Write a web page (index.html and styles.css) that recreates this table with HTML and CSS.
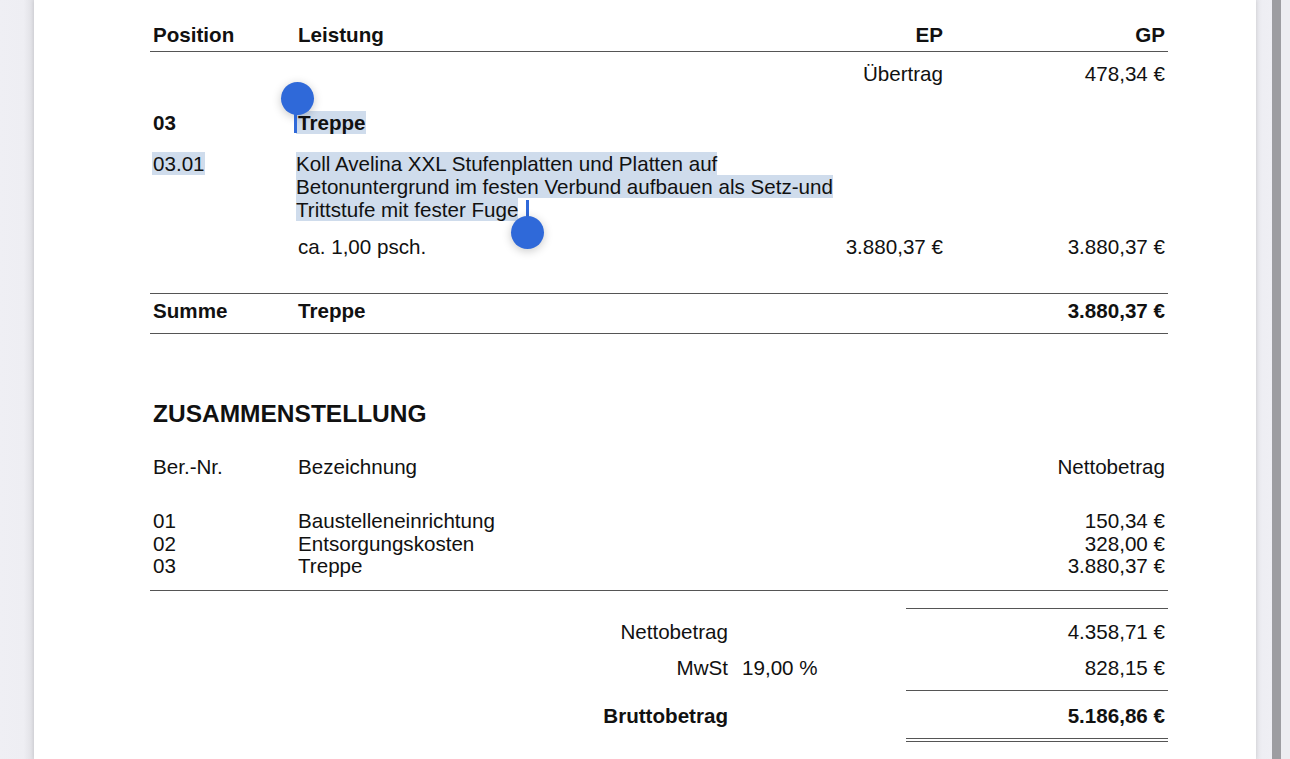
FILE: index.html
```html
<!DOCTYPE html>
<html lang="de">
<head>
<meta charset="utf-8">
<title>Leistungsverzeichnis</title>
<link rel="stylesheet" href="styles.css">
</head>
<body>
<div class="screen">
  <div class="gutter-left"></div>
  <div class="page">
    <div class="doc">
      <div class="row cols head">
        <span class="c-pos">Position</span>
        <span class="c-desc">Leistung</span>
        <span class="c-ep">EP</span>
        <span class="c-gp">GP</span>
      </div>
      <div class="row cols carry">
        <span class="c-pos"></span>
        <span class="c-desc"></span>
        <span class="c-ep">Übertrag</span>
        <span class="c-gp">478,34 €</span>
      </div>
      <div class="row cols group">
        <span class="c-pos">03</span>
        <span class="c-desc"><span class="sel">Treppe</span></span>
        <span class="c-ep"></span>
        <span class="c-gp"></span>
      </div>
      <div class="row cols item">
        <span class="c-pos"><span class="sel pos-sel">03.01</span></span>
        <span class="c-desc desc-text"><span class="sel">Koll Avelina XXL Stufenplatten und Platten auf</span><br><span class="sel">Betonuntergrund im festen Verbund aufbauen als Setz-und</span><br><span class="sel">Trittstufe mit fester Fuge</span></span>
        <span class="c-ep"></span>
        <span class="c-gp"></span>
      </div>
      <div class="row cols qty">
        <span class="c-pos"></span>
        <span class="c-desc qty-text">ca. 1,00 psch.</span>
        <span class="c-ep">3.880,37 €</span>
        <span class="c-gp">3.880,37 €</span>
      </div>
      <div class="row cols sum">
        <span class="c-pos">Summe</span>
        <span class="c-desc qty-text">Treppe</span>
        <span class="c-ep"></span>
        <span class="c-gp">3.880,37 €</span>
      </div>

      <h2 class="title">ZUSAMMENSTELLUNG</h2>

      <div class="lcols list-head">
        <span class="c-pos">Ber.-Nr.</span>
        <span class="c-desc qty-text">Bezeichnung</span>
        <span class="c-gp">Nettobetrag</span>
      </div>
      <div class="list">
        <div class="lcols lrow">
          <span class="c-pos">01</span>
          <span class="c-desc qty-text">Baustelleneinrichtung</span>
          <span class="c-gp">150,34 €</span>
        </div>
        <div class="lcols lrow">
          <span class="c-pos">02</span>
          <span class="c-desc qty-text">Entsorgungskosten</span>
          <span class="c-gp">328,00 €</span>
        </div>
        <div class="lcols lrow">
          <span class="c-pos">03</span>
          <span class="c-desc qty-text">Treppe</span>
          <span class="c-gp">3.880,37 €</span>
        </div>
      </div>

      <div class="totals">
        <div class="rule first"></div>
        <div class="trow t1">
          <span class="t-label">Nettobetrag</span>
          <span class="t-pct"></span>
          <span class="t-amt">4.358,71 €</span>
        </div>
        <div class="trow t2">
          <span class="t-label">MwSt</span>
          <span class="t-pct">19,00 %</span>
          <span class="t-amt">828,15 €</span>
        </div>
        <div class="rule mid"></div>
        <div class="trow t3 strong">
          <span class="t-label">Bruttobetrag</span>
          <span class="t-pct"></span>
          <span class="t-amt">5.186,86 €</span>
        </div>
        <div class="rule double"></div>
      </div>

      <div class="handle handle-start"><span class="knob"></span><span class="stem"></span></div>
      <div class="handle handle-end"><span class="stem"></span><span class="knob"></span></div>
    </div>
  </div>
  <div class="gutter-right">
    <div class="gr-light"></div>
    <div class="gr-bar"></div>
    <div class="gr-light2"></div>
  </div>
</div>
</body>
</html>
```

FILE: styles.css
```css
* { box-sizing: border-box; }

html, body {
  margin: 0;
  padding: 0;
  height: 759px;
  overflow: hidden;
  background: #efeff4;
}

body {
  font-family: "Liberation Sans", Arial, sans-serif;
  font-size: 20.6px;
  line-height: 23px;
  color: #111;
}

.screen {
  display: flex;
  width: 1290px;
  height: 759px;
}

.gutter-left {
  width: 34px;
  flex: none;
  background: linear-gradient(to right, #efeff4 0, #eeeef3 70%, #dedee3 100%);
}

.page {
  width: 1222px;
  flex: none;
  background: #fff;
  box-shadow: 0 0 4px rgba(0, 0, 0, 0.12);
  padding-left: 116px;
  position: relative;
  z-index: 1;
}

.gutter-right {
  flex: 1;
  display: flex;
}

.gr-light {
  width: 16px;
  background: linear-gradient(to right, #e6e6eb 0, #eeeef3 40%, #efeff4 100%);
}

.gr-bar {
  width: 9px;
  background: #9d9da1;
}

.gr-light2 {
  flex: 1;
  background: #ededf1;
}

.doc {
  width: 1018px;
  padding-top: 23px;
  position: relative;
}

.cols {
  display: grid;
  grid-template-columns: 146px 537px 110px 225px;
}

.lcols {
  display: grid;
  grid-template-columns: 146px 1fr 225px;
}

.c-pos { padding-left: 3px; }
.c-desc { padding-left: 0; }
.qty-text { padding-left: 2px; }
.c-ep { text-align: right; }
.c-gp { text-align: right; padding-right: 3px; }

.head {
  font-weight: bold;
  padding-bottom: 5px;
  border-bottom: 1px solid #555;
}

.head .c-desc { padding-left: 2px; }

.carry { margin-top: 10px; }

.group {
  margin-top: 26px;
  font-weight: bold;
}

.item { margin-top: 18px; }

.desc-text { white-space: nowrap; }

.sel {
  background: #cfdcec;
}

.group .sel { padding-left: 2px; }

.pos-sel {
  margin-left: -1px;
  padding-left: 1px;
}

.qty { margin-top: 14px; }

.sum {
  margin-top: 35px;
  padding-top: 5px;
  padding-bottom: 11px;
  border-top: 1px solid #555;
  border-bottom: 1px solid #555;
  font-weight: bold;
}

.title {
  margin: 66px 0 0 0;
  padding-left: 3px;
  font-size: 24.5px;
  line-height: 28px;
  font-weight: bold;
}

.list-head { margin-top: 27px; }

.list {
  margin-top: 32px;
  padding-bottom: 12.5px;
  border-bottom: 1px solid #555;
}

.lrow { line-height: 22.5px; }

.totals { margin-top: 17px; }

.rule {
  width: 262px;
  margin-left: auto;
  border-top: 1px solid #555;
}

.rule.mid { margin-top: 11px; }

.rule.double {
  margin-top: 11px;
  border-top: 4px double #555;
}

.trow {
  display: grid;
  grid-template-columns: 578px 178px 262px;
}

.t1 { margin-top: 11px; }
.t2 { margin-top: 13px; }
.t3 { margin-top: 13px; }

.t-label { text-align: right; }
.t-pct { padding-left: 14px; }
.t-amt { text-align: right; padding-right: 3px; }

.strong { font-weight: bold; }

/* selection handles overlaying the text */
.handle {
  position: absolute;
  width: 34px;
  display: flex;
  flex-direction: column;
  align-items: center;
}

.knob {
  width: 33px;
  height: 33px;
  border-radius: 50%;
  background: #2f69d9;
  box-shadow: 0 2px 10px rgba(0, 0, 0, 0.22);
  flex: none;
}

.stem {
  width: 3px;
  background: #2f69d9;
  flex: none;
}

.handle-start {
  left: 130px;
  top: 82px;
}

.handle-start .stem {
  height: 20px;
  margin-top: -2px;
  margin-right: 3px;
}

.handle-end {
  left: 360px;
  top: 200px;
}

.handle-end .stem {
  height: 18px;
  margin-bottom: -2px;
}
```
